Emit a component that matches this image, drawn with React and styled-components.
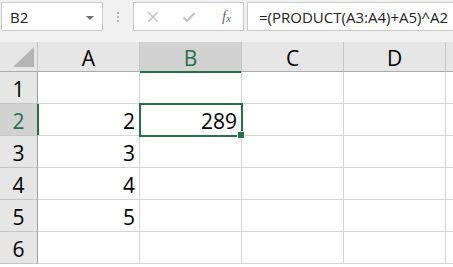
import React from "react"
import styled, {createGlobalStyle} from "styled-components"

const GlobalStyle = createGlobalStyle`
	body {
		margin: 0;
		background: #ffffff;
		font-family: "Open Sans", "Liberation Sans", sans-serif;
		overflow: hidden;
	}
`

const green = "#217346"
const columns = ["A", "B", "C", "D"]
const rows = [
	{n: 1, cells: ["", "", "", ""]},
	{n: 2, cells: ["2", "289", "", ""]},
	{n: 3, cells: ["3", "", "", ""]},
	{n: 4, cells: ["4", "", "", ""]},
	{n: 5, cells: ["5", "", "", ""]},
	{n: 6, cells: ["", "", "", ""]},
]

const App = () => {
	return (
		<>
			<GlobalStyle/>
			<Sheet>
				<Toolbar>
					<NameBox>
						<span>B2</span>
						<Caret/>
					</NameBox>
					<Grip><i/><i/><i/></Grip>
					<Buttons>
						<Icon viewBox="0 0 14 14">
							<path d="M2 2 L12 12 M12 2 L2 12" stroke="#c4c4c4" strokeWidth="1.6" fill="none"/>
						</Icon>
						<Icon viewBox="0 0 14 14">
							<path d="M1.5 7.5 L5 11 L12.5 3" stroke="#c4c4c4" strokeWidth="2" fill="none"/>
						</Icon>
						<Fx>f<sub>x</sub></Fx>
					</Buttons>
					<Formula>=(PRODUCT(A3:A4)+A5)^A2</Formula>
				</Toolbar>
				<Grid>
					<Corner><Triangle/></Corner>
					{columns.map(c =>
						<ColHead key={c} selected={c === "B"}>{c}</ColHead>
					)}
					<ColHead last/>
					{rows.map(r =>
						<React.Fragment key={r.n}>
							<RowHead selected={r.n === 2}>{r.n}</RowHead>
							{r.cells.map((v, i) =>
								<Cell key={i} active={r.n === 2 && i === 1}>
									{v}
									{r.n === 2 && i === 1 && <Handle/>}
								</Cell>
							)}
							<Cell/>
						</React.Fragment>
					)}
				</Grid>
			</Sheet>
		</>
	)
}
export default App

const Sheet = styled.div`
	width: 453px;
	height: 267px;
	overflow: hidden;
	background: #ffffff;
`
const Toolbar = styled.div`
	display: flex;
	height: 42px;
	padding: 2px 0 0 1px;
	box-sizing: border-box;
	align-items: flex-start;
	background: #f1f1f1;
`
const Box = styled.div`
	height: 29px;
	box-sizing: border-box;
	background: #ffffff;
	border: 1px solid #c8c8c8;
	display: flex;
	align-items: center;
`
const NameBox = styled(Box)`
	width: 102px;
	padding: 0 8px 0 8px;
	justify-content: space-between;
	font-size: 15px;
	color: #222222;
`
const Caret = styled.div`
	width: 0;
	height: 0;
	border-left: 4px solid transparent;
	border-right: 4px solid transparent;
	border-top: 4px solid #6d6d6d;
	margin-top: 2px;
`
const Grip = styled.div`
	width: 30px;
	height: 29px;
	display: flex;
	flex-direction: column;
	align-items: center;
	justify-content: center;
	gap: 2px;

	i {
		width: 2px;
		height: 2px;
		background: #b0b0b0;
	}
`
const Buttons = styled(Box)`
	width: 111px;
	padding: 0 0 0 12px;
	gap: 22px;
`
const Icon = styled.svg`
	width: 14px;
	height: 14px;
`
const Fx = styled.span`
	font-family: "Liberation Serif", serif;
	font-style: italic;
	font-size: 15px;
	color: #6a6a6a;
	margin-left: 4px;

	sub {
		font-size: 11px;
		vertical-align: -1px;
	}
`
const Formula = styled(Box)`
	flex: 1;
	margin-left: 3px;
	margin-right: -4px;
	padding-left: 11px;
	font-size: 15px;
	color: #222222;
`
const Grid = styled.div`
	display: grid;
	grid-template-columns: 38px 102px 102px 102px 102px 20px;
	grid-template-rows: 30px repeat(6, 32px);
	font-size: 21px;
	color: #000000;
`
const Corner = styled.div`
	position: relative;
	background: #e6e6e6;
	border-right: 1px solid #c6c6c6;
	border-bottom: 1px solid #ababab;
`
const Triangle = styled.div`
	position: absolute;
	right: 3px;
	bottom: 4px;
	width: 0;
	height: 0;
	border-left: 21px solid transparent;
	border-bottom: 20px solid #b4b4b4;
`
const ColHead = styled.div`
	display: flex;
	align-items: center;
	justify-content: center;
	background: ${p => p.selected ? "#d2d2d2" : "#e6e6e6"};
	color: ${p => p.selected ? green : "#000000"};
	border-right: 1px solid ${p => p.last ? "transparent" : "#c6c6c6"};
	border-bottom: ${p => p.selected ? `2px solid ${green}` : "1px solid #ababab"};
	margin-bottom: ${p => p.selected ? "-1px" : "0"};
	padding-top: 2px;
	box-sizing: border-box;
`
const RowHead = styled.div`
	display: flex;
	align-items: center;
	justify-content: center;
	background: ${p => p.selected ? "#d2d2d2" : "#e6e6e6"};
	color: ${p => p.selected ? green : "#000000"};
	border-right: ${p => p.selected ? `2px solid ${green}` : "1px solid #9e9e9e"};
	margin-right: ${p => p.selected ? "-1px" : "0"};
	border-bottom: 1px solid #c6c6c6;
	box-sizing: border-box;
	padding-top: 2px;
`
const Cell = styled.div`
	position: relative;
	display: flex;
	align-items: center;
	justify-content: flex-end;
	padding: 2px 4px 0 0;
	box-sizing: border-box;
	border-right: 1px solid #d4d4d4;
	border-bottom: 1px solid #d4d4d4;
	${p => p.active && `
		outline: 2px solid ${green};
		outline-offset: -1px;
		z-index: 1;
	`}
`
const Handle = styled.div`
	position: absolute;
	right: -4px;
	bottom: -4px;
	width: 6px;
	height: 6px;
	background: ${green};
	border: 1px solid #ffffff;
`
